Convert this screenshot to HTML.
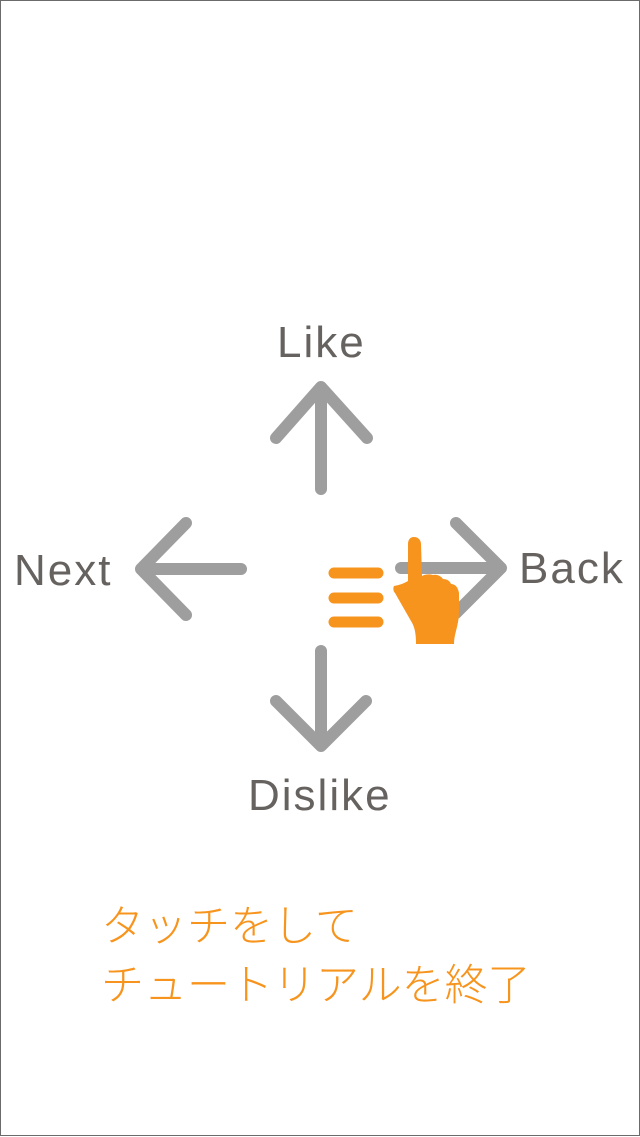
<!DOCTYPE html>
<html><head><meta charset="utf-8"><style>
html,body{margin:0;padding:0;background:#fff}
body{width:640px;height:1136px;position:relative;overflow:hidden;box-sizing:border-box;border:1px solid #6b6b6b}
.t{position:absolute;font-family:"Liberation Sans",sans-serif;color:#666260;font-size:44px;letter-spacing:2px;line-height:1;white-space:nowrap}
.jp{position:absolute;left:100px;font-family:"Liberation Sans","Noto Sans CJK JP",sans-serif;font-weight:300;color:#f7941d;font-size:43px;line-height:57px;white-space:nowrap}
</style></head><body>
<svg width="640" height="1136" style="position:absolute;left:0;top:0">
<g stroke="#9e9e9e" stroke-width="12" stroke-linecap="round" stroke-linejoin="round" fill="none">
<path d="M320 488V386M275 437L320 386L366 437"/>
<path d="M240 568H142M185 522L140 568L185 614"/>
<path d="M400 567H498M455 522L500 567L455 612"/>
<path d="M320 650V742M275 700L320 745L365 700"/>
</g>
<g stroke="#f7941d" stroke-width="11" stroke-linecap="round">
<path d="M333 572H377M333 597H377M333 621H377"/>
</g>
<path fill="#f7941d" d="M413 536C409 536 407 539 407 543L407 580C402 583 398 584 393 585C392 587 392 590 394 592L410 620C413 625 415 630 415 643L453 643C453 632 458 625 458 610L458 592C457 586 454 583 450 583C449 580 446 578 442 578C440 575 436 573 432 574C429 573 424 573 421 575L420 543C420 539 417 536 413 536Z"/>
</svg>
<div class="t" style="left:276px;top:320px">Like</div>
<div class="t" style="left:13px;top:548px">Next</div>
<div class="t" style="left:518px;top:546px">Back</div>
<div class="t" style="left:247px;top:773px">Dislike</div>
<div class="jp" style="top:898px">タッチをして</div>
<div class="jp" style="top:957px">チュートリアルを終了</div>
</body></html>
